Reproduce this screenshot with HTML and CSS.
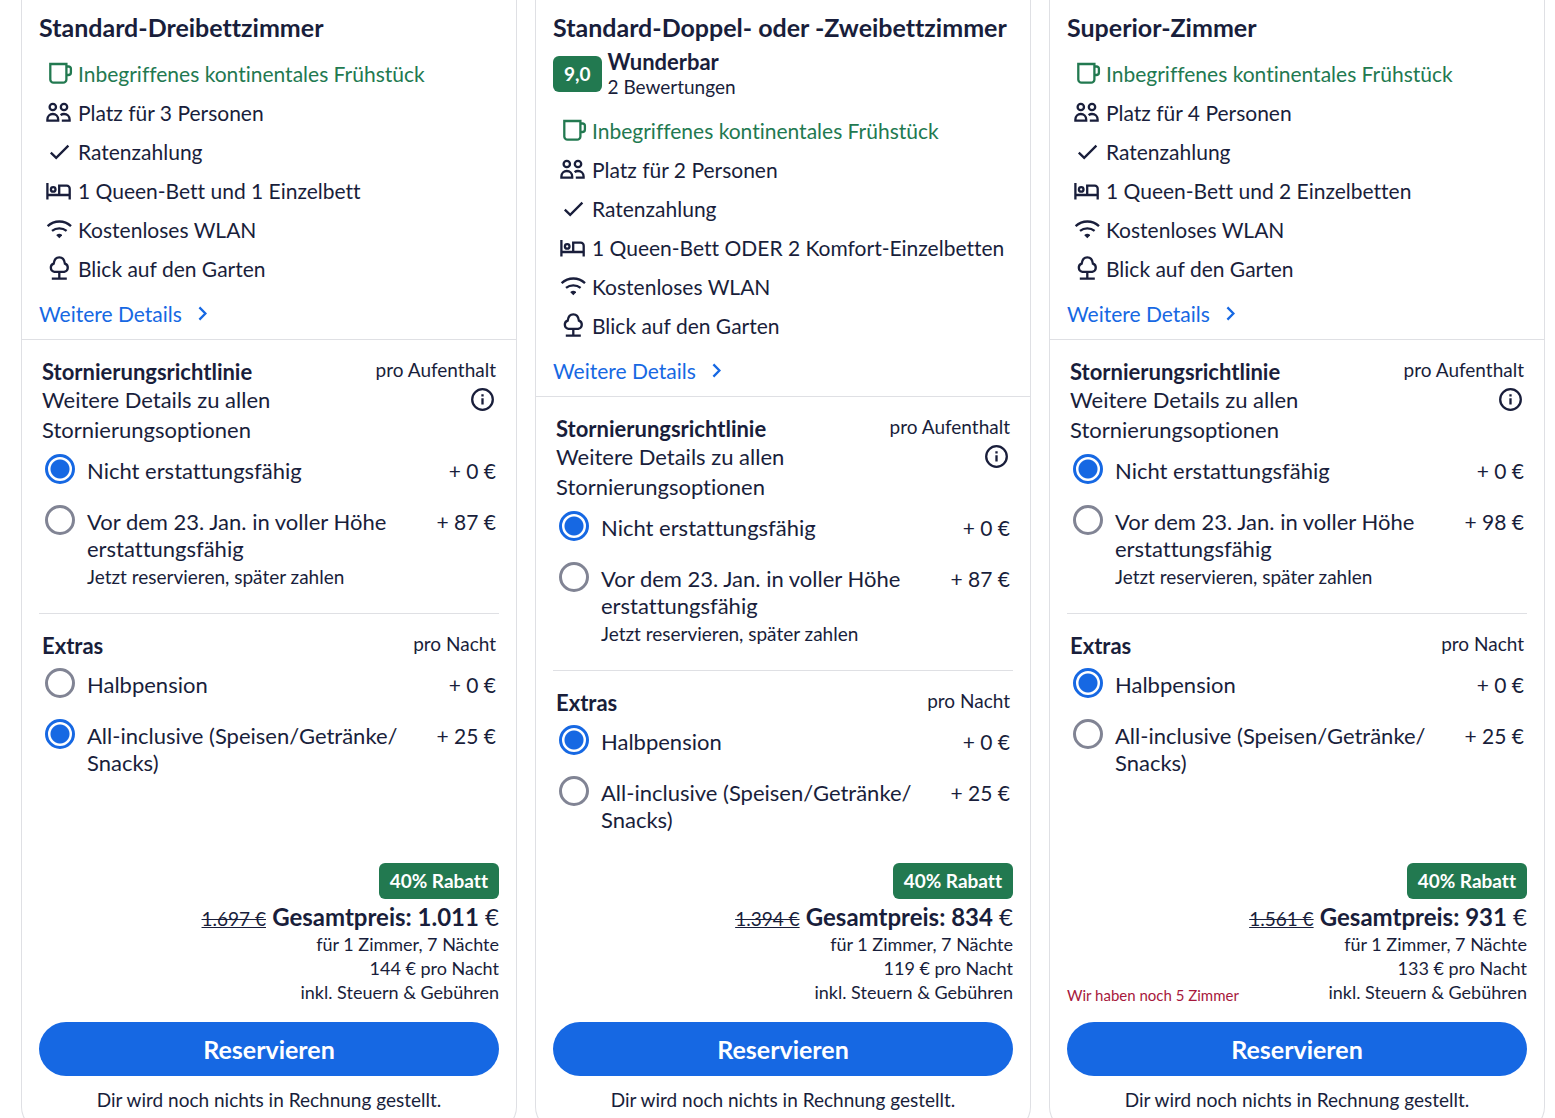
FILE: index.html
```html
<!DOCTYPE html>
<html lang="de">
<head>
    <meta charset="UTF-8">
    <meta name="viewport" content="width=device-width, initial-scale=1.0">
    <title>Zimmerauswahl</title>
    <link rel="stylesheet" href="styles.css">
</head>
<body>
    <!-- icon sprite -->
    <svg class="sprite" aria-hidden="true">
        <symbol id="mug" viewBox="0 0 27 27">
            <path d="M3.3 4H19.4V19.4a3.3 3.3 0 0 1-3.3 3.3H6.6a3.3 3.3 0 0 1-3.3-3.3ZM19.4 6.5H21.6a2.3 2.3 0 0 1 2.3 2.3V12.4a2.6 2.6 0 0 1-2.6 2.6H19.4"/>
        </symbol>
        <symbol id="people" viewBox="0 0 27 27">
            <circle cx="5.8" cy="8" r="3.2"/>
            <circle cx="17" cy="8" r="3.2"/>
            <path d="M.4 21.7V20.6C.4 17.4 2.8 15 5.8 15S11.2 17.4 11.2 20.6V21.7ZM13.6 16.2C14.6 15.4 15.7 15 17 15c3.2 0 5.6 2.4 5.6 5.6V21.7H14.8"/>
        </symbol>
        <symbol id="check" viewBox="0 0 27 27">
            <path d="M3.8 14.6 9.2 19.9 21.4 7.6"/>
        </symbol>
        <symbol id="bed" viewBox="0 0 27 27">
            <circle cx="6.2" cy="12.4" r="2.3"/>
            <path d="M.4 6V22.4M.4 18H22.7M22.7 22.4V11.7a3 3 0 0 0-3-3H12.2V18"/>
        </symbol>
        <symbol id="wifi" viewBox="0 0 27 27">
            <path d="M.6 10.2C7.4 3.9 17.4 3.9 24 10.2M5 14.9C9.2 11.5 15.4 11.5 19.6 14.9"/>
            <path class="solid" d="M9.6 18.8Q12.3 16.8 15 18.8V19.6L12.3 22.2 9.6 19.6Z"/>
        </symbol>
        <symbol id="tree" viewBox="0 0 27 27">
            <path d="M12.3 16.9V23.7M4.8 23.7H19.8M7.4 16.9H17.2A4.3 4.3 0 0 0 17.9 8.6C17.4 4.7 15.2 2.4 12.3 2.4S7.2 4.7 6.7 8.6A4.3 4.3 0 0 0 7.4 16.9Z"/>
        </symbol>
        <symbol id="chevron" viewBox="0 0 27 27">
            <path d="M10.4 7.4 16.4 13.5 10.4 19.6"/>
        </symbol>
        <symbol id="info" viewBox="0 0 27 27">
            <circle cx="13.5" cy="13.5" r="10.3"/>
            <path d="M13.5 12.2V18.6M13.5 8.2V10.5"/>
        </symbol>
    </svg>

    <main class="rooms">
        <article class="card">
            <div class="overview">
                <h2>Standard-Dreibettzimmer</h2>
                <ul class="features">
                    <li class="included"><svg class="icon"><use href="#mug"/></svg>Inbegriffenes kontinentales Frühstück</li>
                    <li><svg class="icon"><use href="#people"/></svg>Platz für 3 Personen</li>
                    <li><svg class="icon"><use href="#check"/></svg>Ratenzahlung</li>
                    <li><svg class="icon"><use href="#bed"/></svg>1 Queen-Bett und 1 Einzelbett</li>
                    <li><svg class="icon"><use href="#wifi"/></svg>Kostenloses WLAN</li>
                    <li><svg class="icon"><use href="#tree"/></svg>Blick auf den Garten</li>
                </ul>
                <a class="more" href="#">Weitere Details<svg class="icon"><use href="#chevron"/></svg></a>
            </div>
            <section class="options">
                <div class="options-head">
                    <h3>Stornierungsrichtlinie</h3>
                    <span class="small">pro Aufenthalt</span>
                </div>
                <div class="policy">
                    <p>Weitere Details zu allen Stornierungsoptionen</p>
                    <button class="info" type="button" aria-label="Info"><svg class="icon"><use href="#info"/></svg></button>
                </div>
                <div class="option">
                    <input type="radio" name="cancel1" id="c1a" checked>
                    <label for="c1a">Nicht erstattungsfähig</label>
                    <span class="price">+ 0 €</span>
                </div>
                <div class="option">
                    <input type="radio" name="cancel1" id="c1b">
                    <label for="c1b">Vor dem 23. Jan. in voller Höhe erstattungsfähig <small>Jetzt reservieren, später zahlen</small></label>
                    <span class="price">+ 87 €</span>
                </div>
            </section>
            <section class="options extras">
                <div class="options-head">
                    <h3>Extras</h3>
                    <span class="small">pro Nacht</span>
                </div>
                <div class="option">
                    <input type="radio" name="extra1" id="e1a">
                    <label for="e1a">Halbpension</label>
                    <span class="price">+ 0 €</span>
                </div>
                <div class="option">
                    <input type="radio" name="extra1" id="e1b" checked>
                    <label for="e1b">All-inclusive (Speisen/Getränke/<wbr>Snacks)</label>
                    <span class="price">+ 25 €</span>
                </div>
            </section>
            <footer class="summary">
                <div class="totals">
                    <div class="amounts">
                        <span class="badge">40% Rabatt</span>
                        <p class="total"><button class="old" type="button">1.697 €</button> <strong>Gesamtpreis: 1.011</strong> €</p>
                        <p>für 1 Zimmer, 7 Nächte</p>
                        <p>144 € pro Nacht</p>
                        <p>inkl. Steuern &amp; Gebühren</p>
                    </div>
                </div>
                <button class="reserve" type="button">Reservieren</button>
                <p class="small note">Dir wird noch nichts in Rechnung gestellt.</p>
            </footer>
        </article>

        <article class="card">
            <div class="overview">
                <h2>Standard-Doppel- oder -Zweibettzimmer</h2>
                <div class="rating">
                    <span class="badge">9,0</span>
                    <div>
                        <p class="verdict">Wunderbar</p>
                        <p class="small">2 Bewertungen</p>
                    </div>
                </div>
                <ul class="features">
                    <li class="included"><svg class="icon"><use href="#mug"/></svg>Inbegriffenes kontinentales Frühstück</li>
                    <li><svg class="icon"><use href="#people"/></svg>Platz für 2 Personen</li>
                    <li><svg class="icon"><use href="#check"/></svg>Ratenzahlung</li>
                    <li><svg class="icon"><use href="#bed"/></svg>1 Queen-Bett ODER 2 Komfort-Einzelbetten</li>
                    <li><svg class="icon"><use href="#wifi"/></svg>Kostenloses WLAN</li>
                    <li><svg class="icon"><use href="#tree"/></svg>Blick auf den Garten</li>
                </ul>
                <a class="more" href="#">Weitere Details<svg class="icon"><use href="#chevron"/></svg></a>
            </div>
            <section class="options">
                <div class="options-head">
                    <h3>Stornierungsrichtlinie</h3>
                    <span class="small">pro Aufenthalt</span>
                </div>
                <div class="policy">
                    <p>Weitere Details zu allen Stornierungsoptionen</p>
                    <button class="info" type="button" aria-label="Info"><svg class="icon"><use href="#info"/></svg></button>
                </div>
                <div class="option">
                    <input type="radio" name="cancel2" id="c2a" checked>
                    <label for="c2a">Nicht erstattungsfähig</label>
                    <span class="price">+ 0 €</span>
                </div>
                <div class="option">
                    <input type="radio" name="cancel2" id="c2b">
                    <label for="c2b">Vor dem 23. Jan. in voller Höhe erstattungsfähig <small>Jetzt reservieren, später zahlen</small></label>
                    <span class="price">+ 87 €</span>
                </div>
            </section>
            <section class="options extras">
                <div class="options-head">
                    <h3>Extras</h3>
                    <span class="small">pro Nacht</span>
                </div>
                <div class="option">
                    <input type="radio" name="extra2" id="e2a" checked>
                    <label for="e2a">Halbpension</label>
                    <span class="price">+ 0 €</span>
                </div>
                <div class="option">
                    <input type="radio" name="extra2" id="e2b">
                    <label for="e2b">All-inclusive (Speisen/Getränke/<wbr>Snacks)</label>
                    <span class="price">+ 25 €</span>
                </div>
            </section>
            <footer class="summary">
                <div class="totals">
                    <div class="amounts">
                        <span class="badge">40% Rabatt</span>
                        <p class="total"><button class="old" type="button">1.394 €</button> <strong>Gesamtpreis: 834</strong> €</p>
                        <p>für 1 Zimmer, 7 Nächte</p>
                        <p>119 € pro Nacht</p>
                        <p>inkl. Steuern &amp; Gebühren</p>
                    </div>
                </div>
                <button class="reserve" type="button">Reservieren</button>
                <p class="small note">Dir wird noch nichts in Rechnung gestellt.</p>
            </footer>
        </article>

        <article class="card">
            <div class="overview">
                <h2>Superior-Zimmer</h2>
                <ul class="features">
                    <li class="included"><svg class="icon"><use href="#mug"/></svg>Inbegriffenes kontinentales Frühstück</li>
                    <li><svg class="icon"><use href="#people"/></svg>Platz für 4 Personen</li>
                    <li><svg class="icon"><use href="#check"/></svg>Ratenzahlung</li>
                    <li><svg class="icon"><use href="#bed"/></svg>1 Queen-Bett und 2 Einzelbetten</li>
                    <li><svg class="icon"><use href="#wifi"/></svg>Kostenloses WLAN</li>
                    <li><svg class="icon"><use href="#tree"/></svg>Blick auf den Garten</li>
                </ul>
                <a class="more" href="#">Weitere Details<svg class="icon"><use href="#chevron"/></svg></a>
            </div>
            <section class="options">
                <div class="options-head">
                    <h3>Stornierungsrichtlinie</h3>
                    <span class="small">pro Aufenthalt</span>
                </div>
                <div class="policy">
                    <p>Weitere Details zu allen Stornierungsoptionen</p>
                    <button class="info" type="button" aria-label="Info"><svg class="icon"><use href="#info"/></svg></button>
                </div>
                <div class="option">
                    <input type="radio" name="cancel3" id="c3a" checked>
                    <label for="c3a">Nicht erstattungsfähig</label>
                    <span class="price">+ 0 €</span>
                </div>
                <div class="option">
                    <input type="radio" name="cancel3" id="c3b">
                    <label for="c3b">Vor dem 23. Jan. in voller Höhe erstattungsfähig <small>Jetzt reservieren, später zahlen</small></label>
                    <span class="price">+ 98 €</span>
                </div>
            </section>
            <section class="options extras">
                <div class="options-head">
                    <h3>Extras</h3>
                    <span class="small">pro Nacht</span>
                </div>
                <div class="option">
                    <input type="radio" name="extra3" id="e3a" checked>
                    <label for="e3a">Halbpension</label>
                    <span class="price">+ 0 €</span>
                </div>
                <div class="option">
                    <input type="radio" name="extra3" id="e3b">
                    <label for="e3b">All-inclusive (Speisen/Getränke/<wbr>Snacks)</label>
                    <span class="price">+ 25 €</span>
                </div>
            </section>
            <footer class="summary">
                <div class="totals">
                    <p class="scarce">Wir haben noch 5 Zimmer</p>
                    <div class="amounts">
                        <span class="badge">40% Rabatt</span>
                        <p class="total"><button class="old" type="button">1.561 €</button> <strong>Gesamtpreis: 931</strong> €</p>
                        <p>für 1 Zimmer, 7 Nächte</p>
                        <p>133 € pro Nacht</p>
                        <p>inkl. Steuern &amp; Gebühren</p>
                    </div>
                </div>
                <button class="reserve" type="button">Reservieren</button>
                <p class="small note">Dir wird noch nichts in Rechnung gestellt.</p>
            </footer>
        </article>
    </main>
</body>
</html>
```
FILE: styles.css
```css
* {
    box-sizing: border-box;
}

body {
    margin: 0;
    height: 100vh;
    overflow: hidden;
    background: #fff;
    color: #191e3b;
    font-family: Lato, "Liberation Sans", sans-serif;
    font-size: 21px;
    line-height: 27px;
    font-variant-ligatures: none;
}

h2, h3, p, ul {
    margin: 0;
    padding: 0;
}

button {
    border: 0;
    padding: 0;
    background: none;
    color: inherit;
    font: inherit;
    cursor: pointer;
}

.sprite {
    position: absolute;
    width: 0;
    height: 0;
}

.icon {
    flex: none;
    display: block;
    width: 27px;
    height: 27px;
    overflow: visible;
    fill: none;
    stroke: currentColor;
    stroke-width: 2.3;
}

symbol {
    overflow: visible;
}

.solid {
    fill: currentColor;
    stroke: none;
}

.small {
    font-size: 19px;
    line-height: 24px;
}

.rooms {
    display: grid;
    grid-template-columns: repeat(3, 1fr);
    gap: 18px;
    padding: 0 10px 0 21px;
}

.card {
    display: flex;
    flex-direction: column;
    border: 1px solid #dfe0e4;
    border-top: 0;
    border-radius: 0 0 24px 24px;
}

/* room overview */
.overview {
    padding: 12px 17px;
    border-bottom: 1px solid #dfe0e4;
}

.overview h2 {
    font-size: 25px;
    line-height: 30px;
    font-weight: 700;
    white-space: nowrap;
}

.rating {
    display: flex;
    align-items: center;
    gap: 6px;
    margin-top: 6px;
}

.verdict {
    font-size: 22px;
    font-weight: 700;
}

.badge {
    display: inline-block;
    padding: 6px 11px;
    border-radius: 6px;
    background: #227950;
    color: #fff;
    font-size: 19px;
    line-height: 24px;
    font-weight: 700;
}

.features {
    display: grid;
    gap: 12px;
    margin-top: 18px;
    padding-left: 8px;
    list-style: none;
}

.features li {
    display: flex;
    gap: 4px;
    white-space: nowrap;
}

.included {
    color: #227950;
}

.more {
    display: flex;
    gap: 7px;
    margin-top: 18px;
    color: #1668e3;
    text-decoration: none;
}

/* cancellation and extras */
.options {
    margin: 0 17px;
    padding: 18px 3px 24px;
}

.extras {
    border-top: 1px solid #dfe0e4;
    padding-bottom: 12px;
}

.options-head,
.policy {
    display: flex;
    justify-content: space-between;
}

.options h3 {
    font-size: 22px;
    font-weight: 700;
}

.policy {
    gap: 24px;
    font-size: 22px;
    line-height: 30px;
}

.info {
    align-self: flex-start;
    margin-top: 1px;
}

.option {
    display: flex;
    align-items: flex-start;
    margin-top: 24px;
}

.options-head + .option,
.policy + .option {
    margin-top: 12px;
}

.option input {
    appearance: none;
    flex: none;
    width: 30px;
    height: 30px;
    margin: -3px 12px 0 3px;
    border: 3px solid #818494;
    border-radius: 50%;
    background: #fff;
}

.option input:checked {
    border-color: #1668e3;
    background: radial-gradient(circle, #1668e3 9px, #fff 10px);
}

.option label {
    flex: 1;
    font-size: 22px;
}

.option small {
    display: block;
    margin-top: 3px;
    font-size: 19px;
    line-height: 24px;
}

.price {
    margin-left: 18px;
    white-space: nowrap;
}

/* totals */
.summary {
    margin-top: auto;
    padding: 18px 17px;
}

.totals {
    display: flex;
    align-items: flex-end;
}

.scarce {
    color: #a7183c;
    font-size: 15px;
    line-height: 18px;
}

.amounts {
    margin-left: auto;
    font-size: 18px;
    line-height: 24px;
    text-align: right;
}

.amounts .badge {
    display: block;
    width: fit-content;
    margin: 0 0 3px auto;
}

.total {
    font-size: 24px;
    line-height: 30px;
}

.old {
    font-size: 19px;
    line-height: 24px;
    text-decoration: underline line-through;
    text-decoration-thickness: 1px;
}

.reserve {
    display: block;
    width: 100%;
    height: 54px;
    margin: 18px 0 12px;
    border-radius: 27px;
    background: #1668e3;
    color: #fff;
    font-size: 25px;
    font-weight: 700;
}

.note {
    text-align: center;
}
```
